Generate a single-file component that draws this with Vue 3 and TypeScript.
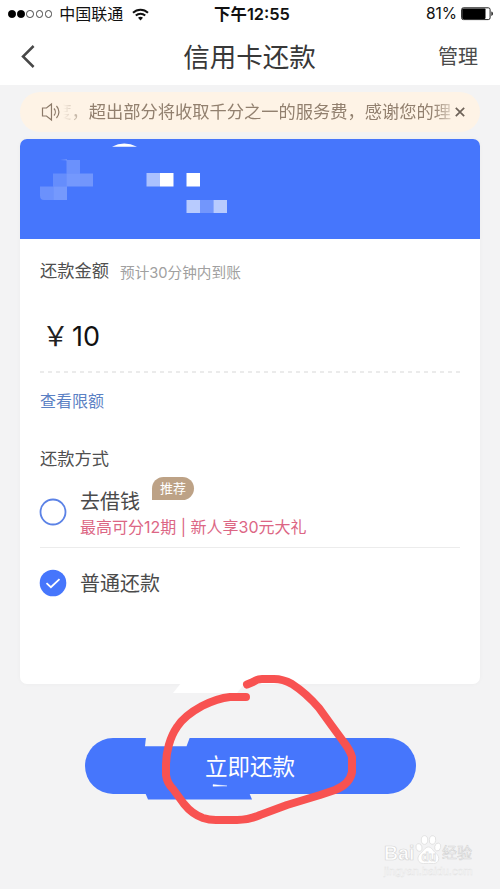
<script setup lang="ts">
import { ref } from 'vue'

interface PayMethod {
  id: string
  name: string
  tag?: string
  promo?: string
}

const title = '信用卡还款'
const notice = '度，超出部分将收取千分之一的服务费，感谢您的理'
const noticeOpen = ref(true)
const amount = ref(10)
const selected = ref('normal')
const signal = [true, true, false, false, false]

const methods: PayMethod[] = [
  { id: 'loan', name: '去借钱', tag: '推荐', promo: '最高可分12期 | 新人享30元大礼' },
  { id: 'normal', name: '普通还款' },
]
</script>

<template>
  <div class="screen">
    <div class="status">
      <div class="carrier">
        <div class="signal">
          <i v-for="(on, i) in signal" :key="i" :class="{ on }"></i>
        </div>
        <span class="carrier-name">中国联通</span>
        <svg class="wifi" width="17" height="13" viewBox="0 0 17 13" fill="none" stroke="#111" stroke-width="2">
          <path d="M1 4.700C5.200.600 11.800.600 16 4.700" />
          <path d="M3.800 7.600c2.700-2.500 6.700-2.500 9.400 0" />
          <path d="M6 9.800c1.400-1.300 3.600-1.300 5 0l-2.500 2.700z" fill="#111" stroke="none" />
        </svg>
      </div>
      <span class="clock">下午12:55</span>
      <div class="power">
        <span>81%</span>
        <svg width="33" height="14" viewBox="0 0 33 14">
          <rect x=".6" y=".8" width="28.5" height="11.8" rx="1.8" fill="#fff" stroke="#222" />
          <rect x="1.200" y="1.500" width="23.300" height="10.400" rx=".8" fill="#000" />
          <path d="M30.400 4.500c2 .6 2 3.800 0 4.400z" fill="#111" />
        </svg>
      </div>
    </div>

    <header class="nav">
      <svg class="back" width="14" height="24" viewBox="0 0 14 24" fill="none" stroke="#484848" stroke-width="2.5">
        <path d="M12.600 1 2 11.500l10.600 10.500" />
      </svg>
      <h1>{{ title }}</h1>
      <span class="manage">管理</span>
    </header>

    <main>
      <div v-if="noticeOpen" class="notice">
        <svg width="20" height="20" viewBox="0 0 20 20" fill="none" stroke="#8b7968" stroke-width="1.200">
          <path d="M1.500 6h4l5-4v16l-5-4h-4z" />
          <path d="M13 6.500c1.800 2 1.800 5 0 7M15.500 4c3.300 3.500 3.300 8.500 0 12" />
        </svg>
        <div class="ticker"><span>{{ notice }}</span></div>
        <svg class="close" width="10" height="10" viewBox="0 0 10 10" stroke="#6d6258" stroke-width="1.700" @click="noticeOpen = false">
          <path d="m.8.8 8.400 8.400m0-8.400L.8 9.200" />
        </svg>
      </div>

      <section class="card">
        <div class="bank">
          <svg width="460" height="100" viewBox="0 0 460 100">
            <path d="M92 7.700Q104 1.500 117 7.700z" fill="#fff" />
            <g fill="#fff" transform="translate(0 -.5)">
              <path d="M40 21.500 47 20.500V22z" opacity=".2" />
              <path d="M46.500 21.500H60V35H46.500z" opacity=".2" />
              <path d="M33 35H46.500V48H33z" opacity=".17" />
              <path d="M46.500 35H60V48H46.500z" opacity=".25" />
              <path d="M60 35H73V48H60z" opacity=".24" />
              <path d="M20 48H33.500V61.500H24Q20 61.500 20 57z" opacity=".2" />
              <path d="M33.500 48H47V61.500H33.500z" opacity=".26" />
              <path d="M126.500 34.500H140V48H126.500z" opacity=".55" />
              <path d="M140 34.500H153.500V48H140zM166.500 34.500H180V48H166.500z" />
              <path d="M166.500 61.500H180V74.500H166.500z" opacity=".62" />
              <path d="M180 61.500H193.500V74.500H180z" opacity=".24" />
              <path d="M193.500 61.500H207V74.500H193.500z" opacity=".62" />
            </g>
          </svg>
        </div>
        <div class="body">
          <div class="label-row">
            <span class="label">还款金额</span>
            <span class="hint">预计30分钟内到账</span>
          </div>
          <div class="amount"><span class="yen">￥</span><span>{{ amount }}</span></div>
          <svg class="dash" width="421" height="2" viewBox="0 0 421 2">
            <path d="M0 1h421" stroke="#e5e5e5" stroke-width="1.500" stroke-dasharray="4 4" />
          </svg>
          <a class="limit">查看限额</a>
          <div class="label method-title">还款方式</div>
          <div class="methods">
            <div v-for="m in methods" :key="m.id" class="method" :class="m.id" @click="selected = m.id">
              <svg class="radio" width="28" height="28" viewBox="0 0 28 28" fill="none">
                <template v-if="selected === m.id">
                  <circle cx="14" cy="14" r="13.300" fill="#4676fc" />
                  <path d="m7.500 14.200 4.400 4 8.600-8" stroke="#fff" stroke-width="1.800" />
                </template>
                <circle v-else cx="14" cy="14" r="12.500" stroke="#5b82e6" stroke-width="1.800" />
              </svg>
              <div class="info">
                <div class="name-row">
                  <span class="name">{{ m.name }}</span>
                  <span v-if="m.tag" class="tag">{{ m.tag }}</span>
                </div>
                <div v-if="m.promo" class="promo">{{ m.promo }}</div>
              </div>
            </div>
          </div>
        </div>
      </section>

      <button class="submit" type="button">立即还款</button>
    </main>

    <svg class="marks" width="290" height="160" viewBox="80 670 290 160">
      <path d="M181 683h64l-8 10h-64z" fill="#fff" />
      <path d="M146 737h44l-3.500 9.300h-41.500z" fill="#f3f3f4" />
      <path d="M145.500 793.500h104l2.500 6H148z" fill="#4676fc" />
      <path d="M213 784.600l14 1.300-14 .4z" fill="#fff" stroke="#fff" stroke-width=".4" />
      <path
        d="M246 697H230C220 698 210 702 202 706C191 712 182 719 177 727C170 737 166 752 166 765V775Q167 783 173 789L184 804Q192 814 203 818Q209 820 216 820H237Q249 820 260 815L287 805L320 795L335 790Q350 784 352 772V757Q350 750 343 741L332 726L319 708Q306 693 292 684Q283 679 274 679H262Q257 679 253 682L247 684.500"
        fill="none" stroke="#f85251" stroke-width="8" stroke-linecap="round" stroke-linejoin="round"
      />
    </svg>

    <div class="watermark">
      <div class="brand">
        <span class="latin">Bai</span>
        <svg width="27" height="30" viewBox="0 0 27 30" fill="#fff" stroke="#dedede" stroke-width=".8">
          <ellipse cx="4" cy="12.500" rx="3" ry="4" transform="rotate(-15 4 12.500)" />
          <ellipse cx="9.500" cy="5" rx="3.200" ry="4.300" />
          <ellipse cx="17.500" cy="5" rx="3.200" ry="4.300" transform="rotate(10 17.500 5)" />
          <ellipse cx="22.700" cy="12" rx="3" ry="4" transform="rotate(15 22.700 12)" />
          <path d="M13.500 12c3.200 0 4.500 4 7.500 6.300 5 4 2.500 10.500-2.500 10.200-3-.2-7-.2-10 0-5 .3-8-5.500-3-10C8.500 16 10 12 13.500 12z" />
          <text x="6.500" y="26" class="du">du</text>
        </svg>
        <span class="cn">经验</span>
      </div>
      <div class="site">jingyan.baidu.com</div>
    </div>
  </div>
</template>

<style>
body {
  margin: 0;
  background: #f3f3f4;
}
</style>

<style scoped>
* {
  box-sizing: border-box;
}
.screen {
  position: relative;
  width: 500px;
  height: 889px;
  overflow: hidden;
  background: #f3f3f4;
  font-family: Inter, "Noto Sans CJK SC", sans-serif;
  color: #4a4a4a;
}
.status {
  display: grid;
  grid-template-columns: 1fr auto 1fr;
  align-items: center;
  height: 28px;
  padding: 0 6px 0 8px;
  background: #fff;
  color: #111;
  font-size: 16px;
  line-height: 28px;
}
.carrier,
.power,
.signal {
  display: flex;
  align-items: center;
}
.signal {
  gap: 1.600px;
}
.signal i {
  width: 7.600px;
  height: 7.600px;
  border: 1px solid #444;
  border-radius: 50%;
}
.signal i.on {
  background: #000;
  border-color: #000;
}
.carrier-name {
  margin: 0 9px 0 7px;
}
.clock {
  padding-left: 2px;
  font-weight: 600;
  font-size: 16.400px;
}
.power {
  justify-content: flex-end;
  gap: 4px;
  font-size: 15.500px;
}
.nav {
  display: grid;
  grid-template-columns: 60px 1fr 60px;
  align-items: center;
  height: 57px;
  padding: 0 22px 0 21px;
  background: #fff;
}
h1 {
  margin: 0;
  font-size: 26.500px;
  font-weight: 400;
  line-height: 56px;
  text-align: center;
  color: #383838;
}
.manage {
  padding-bottom: 2px;
  font-size: 20px;
  text-align: right;
  color: #4a4a4a;
}
main {
  display: flex;
  flex-direction: column;
  padding: 7px 20px 0;
}
.notice {
  display: flex;
  align-items: center;
  height: 40px;
  padding: 0 15px 0 21px;
  border-radius: 20px;
  background: #fef3e6;
}
.ticker {
  display: flex;
  justify-content: flex-end;
  width: 389px;
  margin: 0 4px 0 2px;
  overflow: hidden;
  white-space: nowrap;
  font-size: 17.250px;
  line-height: 40px;
  color: #92806f;
  mask-image: linear-gradient(90deg, transparent, #000 26px, #000 370px, rgba(0, 0, 0, 0.3));
}
.card {
  height: 545px;
  margin-top: 7px;
  border-radius: 7px;
  background: #fff;
  overflow: hidden;
  box-shadow: 0 0 5px rgba(0, 0, 0, 0.03);
}
.bank {
  height: 100px;
  background: #4676fc;
}
.bank svg {
  display: block;
}
.body {
  display: flex;
  flex-direction: column;
  padding: 17px 20px 0;
}
.label-row {
  display: flex;
  align-items: center;
  gap: 11px;
  height: 30px;
}
.label {
  font-size: 17.250px;
  line-height: 30px;
  color: #505050;
}
.hint {
  font-size: 14.650px;
  color: #a0a0a0;
}
.amount {
  display: flex;
  align-items: center;
  height: 50px;
  margin-top: 25px;
  font-size: 27px;
  color: #111;
}
.yen {
  width: 30px;
  margin: -4px 0 0 2px;
  color: #222;
}
.dash {
  display: block;
  margin-top: 10px;
}
.limit {
  height: 28px;
  margin-top: 14px;
  font-size: 16px;
  line-height: 28px;
  color: #5b81c4;
}
.method-title {
  margin-top: 29px;
}
.method {
  display: flex;
  align-items: center;
  gap: 13px;
  height: 70px;
  margin-left: -1px;
}
.method.loan {
  height: 74px;
  margin-left: 0;
  border-bottom: 1px solid #ececec;
}
.method.loan .radio {
  margin: 2px 0 0 -1px;
}
.method.normal .radio {
  margin-top: -1px;
}
.info {
  display: flex;
  flex-direction: column;
}
.name-row {
  display: flex;
  align-items: flex-start;
  gap: 12px;
}
.name {
  font-size: 20px;
  line-height: 32px;
}
.loan .info {
  padding-top: 4px;
}
.normal .info {
  padding-top: 2px;
}
.loan .name-row {
  height: 29px;
}
.tag {
  height: 23px;
  margin-top: -9px;
  padding: 0 8px;
  border-radius: 12px 12px 12px 0;
  background: #bda286;
  color: #fff;
  font-size: 13px;
  line-height: 23px;
}
.promo {
  font-size: 16px;
  line-height: 24px;
  color: #dc6684;
}
.submit {
  align-self: center;
  width: 331px;
  height: 56px;
  margin-top: 54px;
  padding: 0;
  border: 0;
  border-radius: 28px;
  background: #4676fc;
  color: #fff;
  font-family: inherit;
  font-size: 22.500px;
  line-height: 55px;
}
.marks {
  position: absolute;
  left: 80px;
  top: 670px;
}
.watermark {
  position: absolute;
  left: 384px;
  top: 835px;
  color: #fff;
}
.brand {
  display: flex;
  align-items: flex-end;
  height: 30px;
}
.latin {
  width: 31px;
  font: 700 19.500px/24px "Liberation Sans", sans-serif;
  -webkit-text-stroke: 0.7px #d6d6d6;
}
.cn {
  font-size: 15px;
  line-height: 24px;
  -webkit-text-stroke: 0.6px #d4d4d4;
}
.du {
  font: 700 12px "Liberation Sans", sans-serif;
}
.site {
  font: 11px/13px "Liberation Sans", sans-serif;
  -webkit-text-stroke: 0.4px #e2e2e2;
}
</style>
